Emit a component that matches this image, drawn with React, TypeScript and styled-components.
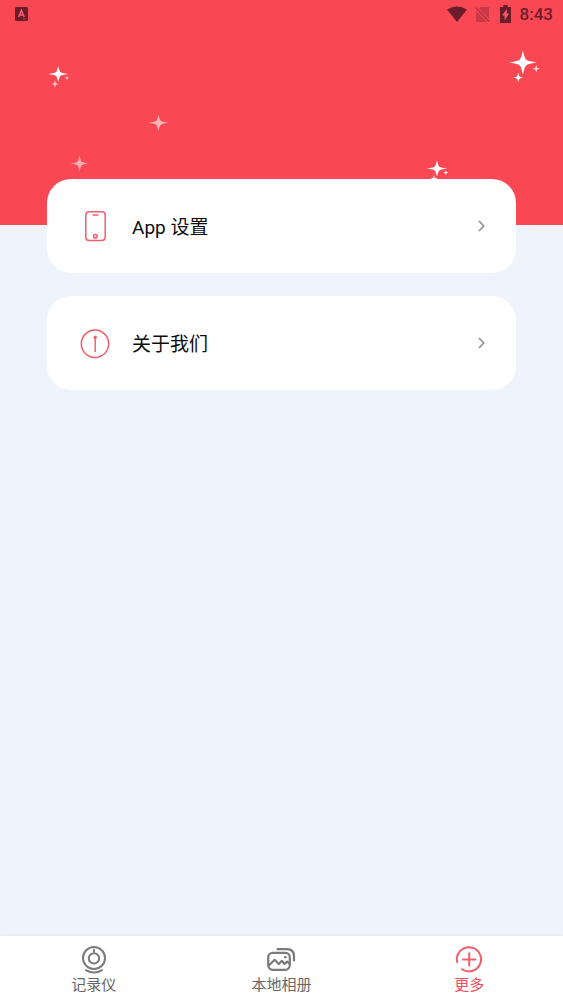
import React from 'react';
import styled, { createGlobalStyle } from 'styled-components';

const GlobalStyle = createGlobalStyle`
  *, *::before, *::after { box-sizing: border-box; }
  body {
    margin: 0;
    background: #eff3fc;
    font-family: Roboto, "Noto Sans CJK SC", sans-serif;
  }
`;

const Page = styled.div`
  display: flex;
  flex-direction: column;
  min-height: 100vh;
`;

const Hero = styled.header`
  position: relative;
  height: 225px;
  overflow: hidden;
  background: #f94853;
`;

const Sky = styled.svg`
  position: absolute;
  inset: 0;
  width: 100%;
  height: 100%;
`;

const StatusBar = styled.div`
  display: flex;
  align-items: center;
  justify-content: space-between;
  height: 28px;
  padding: 0 10px 0 15px;
  color: #6d1c2a;
`;

const StatusGroup = styled.div`
  display: flex;
  align-items: center;
`;

const StatusIcon = styled.svg<{ $gap?: number }>`
  display: block;
  margin-right: ${({ $gap = 0 }) => $gap}px;
`;

const Clock = styled.time`
  font-size: 17px;
  font-weight: 500;
  line-height: 28px;
`;

const Menu = styled.main`
  position: relative;
  display: flex;
  flex: 1;
  flex-direction: column;
  gap: 23px;
  margin-top: -46px;
  padding: 0 47px 24px;
`;

const Card = styled.button`
  display: flex;
  align-items: center;
  gap: 22px;
  width: 100%;
  height: 94px;
  padding: 0 30px 0 33px;
  border: 0;
  border-radius: 24px;
  background: #fff;
  color: #0c0c0c;
  font-family: inherit;
  font-size: 19px;
  line-height: 28px;
  text-align: left;
  cursor: pointer;
`;

const CardLabel = styled.span`
  flex: 1;
  padding-top: 4px;
`;

const LineIcon = styled.svg`
  display: block;
  flex: none;
  fill: none;
  stroke: currentColor;
`;

const CardIcon = styled(LineIcon)`
  color: #f0606c;
`;

const Chevron = styled(LineIcon)`
  color: #969696;
`;

const TabBar = styled.nav`
  position: sticky;
  bottom: 0;
  display: grid;
  grid-template-columns: repeat(3, 1fr);
  height: 66px;
  background: #fff;
  box-shadow: 0 -1px 2px rgba(60, 70, 100, 0.06);
`;

const Tab = styled.button<{ $active?: boolean }>`
  display: flex;
  flex-direction: column;
  align-items: center;
  padding: 9px 0 0;
  border: 0;
  background: none;
  color: ${({ $active }) => ($active ? '#ee4e5e' : '#666')};
  font-family: inherit;
  font-size: 15px;
  line-height: 20px;
  cursor: pointer;
`;

const TabIcon = styled(LineIcon)<{ $active?: boolean }>`
  color: ${({ $active }) => ($active ? '#f0606c' : '#7a7a7a')};
`;

type StarProps = { x: number; y: number; w: number; h: number; opacity?: number };

function Star({ x, y, w, h, opacity = 1 }: StarProps) {
  const a = w * 0.22;
  const b = h * 0.26;
  return (
    <path
      transform={`translate(${x} ${y})`}
      d={`M0 ${-h}Q${a * 0.6} ${-b * 1.2} ${a} ${-b}Q${a * 1.3} ${-b * 0.5} ${w} 0Q${a * 1.3} ${b * 0.5} ${a} ${b}Q${a * 0.6} ${b * 1.2} 0 ${h}Q${-a * 0.6} ${b * 1.2} ${-a} ${b}Q${-a * 1.3} ${b * 0.5} ${-w} 0Q${-a * 1.3} ${-b * 0.5} ${-a} ${-b}Q${-a * 0.6} ${-b * 1.2} 0 ${-h}Z`}
      fill="#fff"
      opacity={opacity}
    />
  );
}

const stars: StarProps[] = [
  { x: 58.2, y: 74, w: 10, h: 8 },
  { x: 55, y: 84, w: 4, h: 4, opacity: 0.7 },
  { x: 67, y: 78, w: 2.5, h: 2.5, opacity: 0.7 },
  { x: 158.5, y: 122.8, w: 10, h: 8, opacity: 0.6 },
  { x: 79.6, y: 163.6, w: 9, h: 8, opacity: 0.55 },
  { x: 522.9, y: 62.6, w: 14, h: 12 },
  { x: 518.2, y: 77.6, w: 5, h: 5 },
  { x: 536.2, y: 68.8, w: 4, h: 4, opacity: 0.85 },
  { x: 437, y: 168.6, w: 10, h: 8 },
  { x: 434, y: 178.6, w: 4, h: 4, opacity: 0.9 },
  { x: 445.8, y: 172.6, w: 3, h: 3, opacity: 0.9 },
];

export default function App() {
  return (
    <>
      <GlobalStyle />
      <Page>
        <Hero>
          <Sky viewBox="0 0 563 225" preserveAspectRatio="xMidYMid slice" aria-hidden="true">
            {stars.map((star) => (
              <Star key={`${star.x}-${star.y}`} {...star} />
            ))}
          </Sky>
          <StatusBar>
            <StatusIcon width="13" height="14" viewBox="0 0 13 14" aria-hidden="true">
              <rect width="13" height="14" rx="1.5" fill="currentColor" />
              <path d="M3.6 10 6.4 3.4 9.2 10M4.6 8h3.6" fill="none" stroke="#f3606c" strokeWidth="1.5" />
              <path d="M8 12h3" stroke="#b63a47" />
            </StatusIcon>
            <StatusGroup>
              <StatusIcon $gap={8} width="20" height="16" viewBox="0 0 20 16" aria-hidden="true">
                <path d="M0 3.6Q10-2.4 20 3.6L10 16Z" fill="currentColor" />
              </StatusIcon>
              <StatusIcon $gap={10} width="15" height="17" viewBox="0 0 15 17" aria-hidden="true">
                <path d="M5.5 1H14V13L3.7 2.8ZM1 4.6 12.2 16H1Z" fill="currentColor" opacity="0.32" />
                <path d="M.8 1.8 14.2 15.8" stroke="currentColor" strokeWidth="1.3" opacity="0.5" />
              </StatusIcon>
              <StatusIcon $gap={9} width="11" height="18" viewBox="0 0 11 18" aria-hidden="true">
                <path d="M3.3 0h4.4v2H11v16H0V2h3.3Z" fill="currentColor" />
                <path d="M7 4 2 10.4h2.6v4.8l4.5-6.6H6.6Z" fill="#f3606c" />
              </StatusIcon>
              <Clock>8:43</Clock>
            </StatusGroup>
          </StatusBar>
        </Hero>

        <Menu>
          <Card type="button">
            <CardIcon width="30" height="32" viewBox="0 0 30 32" strokeWidth="1.5" aria-hidden="true">
              <rect x="5.8" y="1.8" width="19.4" height="28.6" rx="3.2" />
              <path d="M13 5h5" strokeLinecap="round" />
              <circle cx="15.4" cy="26.2" r="1.8" />
            </CardIcon>
            <CardLabel>App 设置</CardLabel>
            <Chevron width="9" height="14" viewBox="0 0 9 14" strokeWidth="1.8" aria-hidden="true">
              <path d="M2 2 6.7 7 2 12" />
            </Chevron>
          </Card>
          <Card type="button">
            <CardIcon width="30" height="32" viewBox="0 0 30 32" strokeWidth="1.5" aria-hidden="true">
              <circle cx="15" cy="16.8" r="13.7" />
              <path d="M15.2 11v13.4" strokeLinecap="round" />
              <circle cx="15.2" cy="10.4" r="1.3" fill="currentColor" strokeWidth="1" />
            </CardIcon>
            <CardLabel>关于我们</CardLabel>
            <Chevron width="9" height="14" viewBox="0 0 9 14" strokeWidth="1.8" aria-hidden="true">
              <path d="M2 2 6.7 7 2 12" />
            </Chevron>
          </Card>
        </Menu>

        <TabBar>
          <Tab type="button">
            <TabIcon width="30" height="30" viewBox="0 0 30 30" strokeWidth="2" aria-hidden="true">
              <circle cx="15" cy="13" r="11" />
              <circle cx="15" cy="13.4" r="5.2" />
              <path d="M15 4.8v2" strokeLinecap="round" />
              <path d="M7 25.2Q15 30 23 25.2" strokeLinecap="round" />
            </TabIcon>
            记录仪
          </Tab>
          <Tab type="button">
            <TabIcon width="30" height="30" viewBox="0 0 30 30" strokeWidth="2.2" strokeLinecap="round" strokeLinejoin="round" aria-hidden="true">
              <rect x="2.2" y="7.8" width="21.6" height="17" rx="4.5" />
              <path d="M11.5 4.2H21Q28 4.2 28 11.5V15.5" />
              <path d="M3 20.2 8.7 14.8 12.8 19 16 15.8 18.3 18.8 21.2 16.6 23.5 18.7" />
              <circle cx="19.3" cy="12.2" r="0.9" fill="currentColor" strokeWidth="1" />
            </TabIcon>
            本地相册
          </Tab>
          <Tab type="button" $active aria-current="page">
            <TabIcon $active width="30" height="30" viewBox="0 0 30 30" strokeWidth="2" strokeLinecap="round" aria-hidden="true">
              <path d="M3.2 17.2A12.1 12.1 0 1 1 8 24.2" />
              <path d="M15.2 8.2v12.4M9 14.4h12.4" />
            </TabIcon>
            更多
          </Tab>
        </TabBar>
      </Page>
    </>
  );
}
